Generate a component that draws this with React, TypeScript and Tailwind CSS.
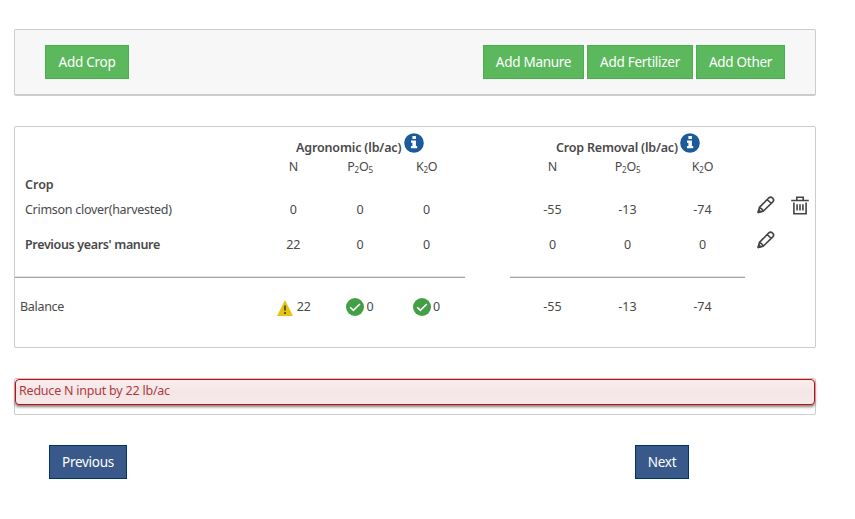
import type { ReactNode } from "react";

const P2O5 = (
  <span>
    P<span className="relative top-[2px] text-[8px]">2</span>O
    <span className="relative top-[2px] text-[8px]">5</span>
  </span>
);
const K2O = (
  <span>
    K<span className="relative top-[2px] text-[8px]">2</span>O
  </span>
);

function Info() {
  return (
    <svg className="mb-[5px] ml-[2px] h-5 w-5 shrink-0" viewBox="0 0 20 20">
      <circle cx="10" cy="10" r="9.8" fill="#1b5a9b" />
      <path d="M8.4 3h3.5v2.9H8.4zM7 7.6h4.9v5.3h1.3v2.3H6.9v-2.3h1.5V9.8H7z" fill="#fff" />
    </svg>
  );
}

function Pencil() {
  return (
    <svg className="h-[18px] w-[18px]" viewBox="0 0 18 18" fill="none" stroke="#444" strokeWidth="1.6" strokeLinejoin="round">
      <path d="M1.2 16.4 2.4 11.4 11.8 1.9q1.8-1.7 3.8.2t.2 3.8L6.2 15.2zM10.2 3.5l4.1 4M2.4 11.4q2.8.9 3.8 3.8" />
      <path d="M1.2 16.4l.6-2.5 1.9 1.9z" fill="#444" />
    </svg>
  );
}

function Trash() {
  return (
    <svg className="h-[19px] w-[18px]" viewBox="0 0 18 19" fill="none" stroke="#444" strokeWidth="1.6">
      <path d="M.2 4.5h17.6M5.8 4V1.3h6.4V4M2.9 6.4v11.3h12.2V6.4M6.1 8.2v6.4M9 8.2v6.4M11.9 8.2v6.4" />
    </svg>
  );
}

function Warning() {
  return (
    <svg className="relative top-[1px] h-4 w-4" viewBox="0 0 16 16">
      <path d="M8 0l8 16H0z" fill="#e9c20f" />
      <path d="M7 5.5h2v5H7zM7 12h2v2H7z" fill="#555b48" />
    </svg>
  );
}

function Check() {
  return (
    <svg className="h-[18px] w-[18px]" viewBox="0 0 18 18">
      <circle cx="9" cy="9" r="9" fill="#439f46" />
      <path d="M4.2 9.2l3.2 3.1 6.5-6.3" fill="none" stroke="#fff" strokeWidth="1.6" />
    </svg>
  );
}

function Row({
  label,
  left,
  right,
  actions,
  className,
}: {
  label?: ReactNode;
  left?: ReactNode[];
  right?: ReactNode[];
  actions?: ReactNode;
  className: string;
}) {
  return (
    <div className={`flex items-center ${className}`}>
      <div className="w-[245px] whitespace-nowrap">{label}</div>
      <div className="grid w-[200px] grid-cols-3 text-center">
        {left?.map((v, i) => <div key={i}>{v}</div>)}
      </div>
      <div className="ml-[55px] grid w-[225px] grid-cols-3 text-center">
        {right?.map((v, i) => <div key={i}>{v}</div>)}
      </div>
      {actions}
    </div>
  );
}

function Button({ children, className }: { children: string; className: string }) {
  return (
    <button className={`flex h-[34px] items-center justify-center border text-[13.5px] tracking-[-0.28px] whitespace-nowrap text-white ${className}`}>
      {children}
    </button>
  );
}

const green = "border-[#4cae4c] bg-[#5cb85c]";
const blue = "border-[#003366] bg-[#38598a]";

export default function App() {
  return (
    <div className="h-[519px] w-[855px] bg-white pt-[29px] pl-[14px] font-['Noto_Sans',sans-serif] text-[12.5px] leading-[18px] text-[#494949]">
      <div className="flex h-[67px] w-[802px] items-start rounded-[2px] border border-b-2 border-[#ccc] bg-[#f7f7f7] pt-[15px] pr-[30px] pl-[30px]">
        <Button className={`w-[84px] ${green}`}>Add Crop</Button>
        <div className="ml-auto flex gap-[3px]">
          <Button className={`w-[101px] ${green}`}>Add Manure</Button>
          <Button className={`w-[106px] ${green}`}>Add Fertilizer</Button>
          <Button className={`w-[89px] ${green}`}>Add Other</Button>
        </div>
      </div>

      <div className="mt-[30px] h-[222px] w-[802px] rounded-[2px] border border-[#ccc]">
        <div className="flex h-[31px] items-end font-semibold whitespace-nowrap">
          <div className="ml-[281px] flex w-[260px] items-end">
            <span className="mb-[1px] w-[106px] tracking-[-0.15px]">Agronomic (lb/ac)</span>
            <Info />
          </div>
          <div className="flex items-end">
            <span className="mb-[1px] w-[122px] tracking-[-0.2px]">Crop Removal (lb/ac)</span>
            <Info />
          </div>
        </div>
        <Row className="h-[18px] tracking-[-0.2px]" left={["N", P2O5, K2O]} right={["N", P2O5, K2O]} />
        <Row className="h-[18px]" label={<b className="pl-[10px] font-semibold">Crop</b>} />
        <Row
          className="h-[32px]"
          label={<span className="pl-[10px] tracking-[-0.28px]">Crimson clover(harvested)</span>}
          left={["0", "0", "0"]}
          right={["-55", "-13", "-74"]}
          actions={
            <div className="mb-[10px] ml-[17px] flex items-center gap-[16px]">
              <Pencil />
              <Trash />
            </div>
          }
        />
        <Row
          className="h-[38px]"
          label={<b className="pl-[10px] font-semibold tracking-[-0.35px]">Previous years' manure</b>}
          left={["22", "0", "0"]}
          right={["0", "0", "0"]}
          actions={<div className="mb-[10px] ml-[17px]"><Pencil /></div>}
        />
        <div className="mt-[12px] flex gap-[45px]">
          <div className="h-[2px] w-[450px] border-t border-[#e3e3e3] bg-[#a5a5a5]" />
          <div className="h-[2px] w-[235px] border-t border-[#e3e3e3] bg-[#a5a5a5]" />
        </div>
        <Row
          className="h-[58px]"
          label={<span className="pl-[5px] tracking-[-0.3px]">Balance</span>}
          left={[
            <span className="flex items-center justify-center gap-1 pl-px"><Warning />22</span>,
            <span className="flex items-center justify-center gap-[2px]"><Check />0</span>,
            <span className="flex items-center justify-center gap-[2px]"><Check />0</span>,
          ]}
          right={["-55", "-13", "-74"]}
        />
      </div>

      <div className="mt-[30px] h-[37px] w-[802px] rounded-[2px] border border-[#ccc]">
        <div className="h-[26px] rounded-[4px] border border-[#cd0a0a] bg-[#f5e7e7] bg-linear-to-b from-[#f9eded] via-[#f4e6e6] to-[#f7e9e9] pl-[3px] leading-[22px] tracking-[-0.22px] text-[#b13a41] shadow-[0_2px_3px_rgba(0,0,0,0.5)]">
          Reduce N input by 22 lb/ac
        </div>
      </div>

      <div className="mt-[30px] flex pl-[35px]">
        <Button className={`w-[78px] ${blue}`}>Previous</Button>
        <Button className={`ml-[508px] w-[54px] ${blue}`}>Next</Button>
      </div>
    </div>
  );
}
